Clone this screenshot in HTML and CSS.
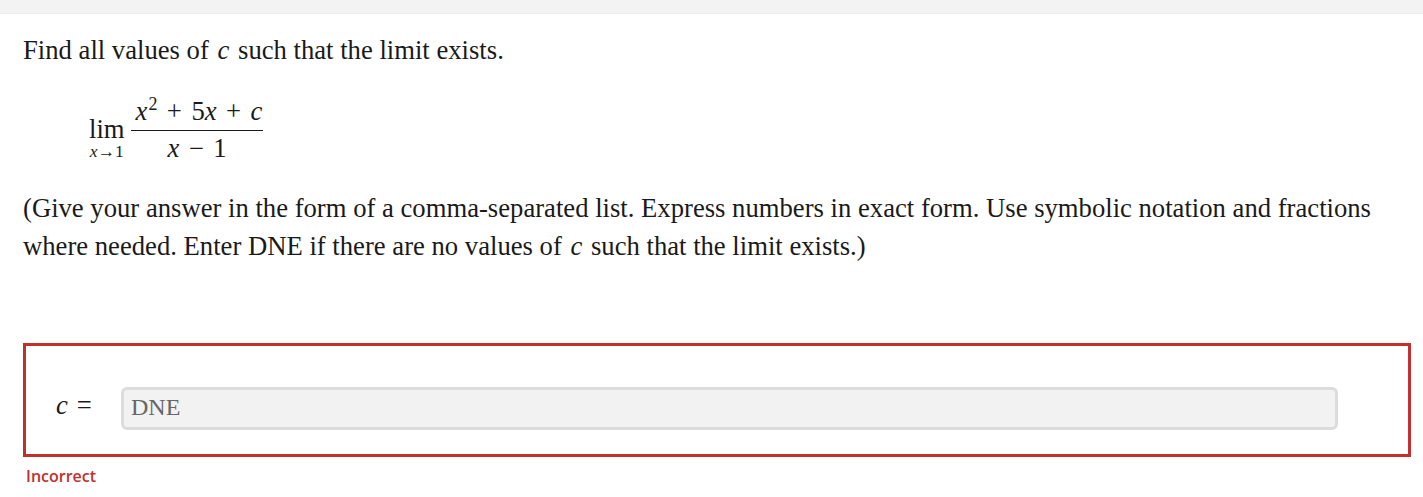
FILE: index.html
```html
<!DOCTYPE html>
<html>
<head>
<meta charset="utf-8">
<link rel="stylesheet" href="styles.css">
</head>
<body>
<div class="topbar"></div>
<div class="content">
  <p class="question">Find all values of <i class="var">c</i> such that the limit exists.</p>
  <div class="math">
    <span class="lim">
      <span class="lim-word">lim</span>
      <span class="lim-sub"><i>x</i>→1</span>
    </span>
    <span class="frac">
      <span class="num"><i>x</i><sup>2</sup><span class="op">+</span>5<i>x</i><span class="op">+</span><i>c</i></span>
      <span class="den"><i>x</i><span class="op">−</span>1</span>
    </span>
  </div>
  <p class="instructions">(Give your answer in the form of a comma-separated list. Express numbers in exact form. Use symbolic notation and fractions where needed. Enter DNE if there are no values of <i class="var">c</i> such that the limit exists.)</p>
  <div class="answer-box">
    <span class="answer-label"><i>c</i><span class="eq">=</span></span>
    <div class="answer-input">DNE</div>
  </div>
  <div class="status">Incorrect</div>
</div>
</body>
</html>
```

FILE: styles.css
```css
body {
  margin: 0;
  background: #ffffff;
  font-family: "Liberation Serif", "Times New Roman", serif;
  color: #1a1a1a;
}
.topbar {
  height: 13px;
  background: #f3f3f3;
  border-bottom: 1px solid #ececec;
}
.content {
  padding: 0 12px 0 23px;
}
.question {
  margin: 21px 0 0 0;
  font-size: 26.67px;
  line-height: 30px;
}
.var {
  font-style: italic;
  margin: 0 2px;
}
.math {
  display: flex;
  align-items: flex-start;
  margin: 32.5px 0 0 66px;
  font-size: 26.67px;
}
.op {
  display: inline-block;
  width: 34px;
  text-align: center;
}
.lim {
  display: flex;
  flex-direction: column;
  align-items: center;
  margin-right: 6px;
  padding-top: 18px;
}
.lim-word {
  line-height: 27px;
}
.lim-sub {
  font-size: 17.5px;
  line-height: 16.5px;
}
.frac {
  display: flex;
  flex-direction: column;
  align-items: center;
}
.num {
  line-height: 27px;
  padding: 0 1px 5.5px 5px;
  border-bottom: 1px solid #1a1a1a;
}
.num sup {
  font-size: 18px;
  line-height: 0;
  vertical-align: 10px;
  margin-left: 1px;
}
.den {
  line-height: 27px;
  padding-top: 3.5px;
}
.instructions {
  margin: 27.5px 0 0 0;
  font-size: 26.67px;
  line-height: 38px;
}
.answer-box {
  margin-top: 78px;
  border: 3px solid #c1302c;
  height: 108px;
  box-sizing: content-box;
  display: flex;
  align-items: flex-start;
  padding: 0 70px 0 30px;
}
.answer-label {
  font-size: 26.67px;
  line-height: 30px;
  margin-top: 44px;
  width: 65px;
  flex: none;
  white-space: nowrap;
}
.eq {
  margin-left: 9px;
}
.answer-input {
  flex: 1;
  margin-top: 41px;
  height: 37px;
  border: 3px solid #dcdcdc;
  border-radius: 6px;
  background: #f2f2f2;
  color: #666666;
  font-size: 24px;
  line-height: 35px;
  padding-left: 7px;
}
.status {
  margin: 9px 0 0 3px;
  font-family: "Open Sans", sans-serif;
  font-weight: 600;
  font-size: 16px;
  line-height: 20px;
  color: #c1302c;
}
```
